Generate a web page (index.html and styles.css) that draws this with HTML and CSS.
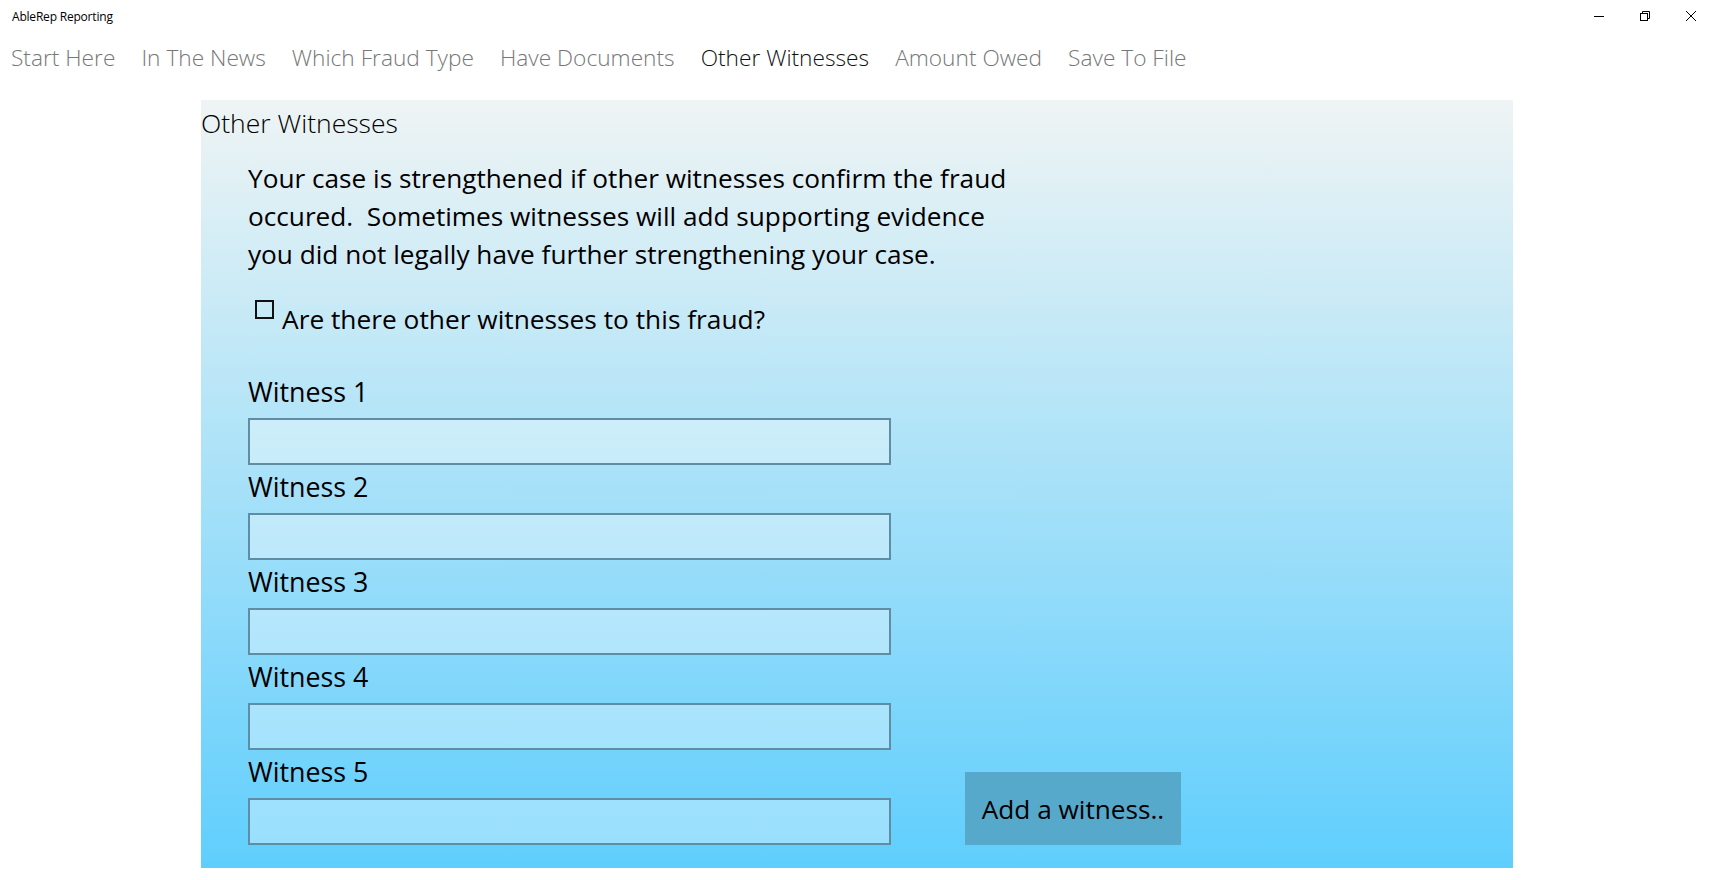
FILE: index.html
```html
<!DOCTYPE html>
<html lang="en">
<head>
  <meta charset="UTF-8" />
  <meta name="viewport" content="width=device-width, initial-scale=1.0" />
  <title>AbleRep Reporting</title>
  <link rel="stylesheet" href="styles.css">
</head>
<body>
  <header class="titlebar">
    <span class="app-name">AbleRep Reporting</span>
    <div class="win-controls">
      <svg class="win-btn" width="46" height="32" viewBox="0 0 46 32">
        <line x1="18" y1="16.5" x2="28" y2="16.5" stroke="#000" stroke-width="1" />
      </svg>
      <svg class="win-btn" width="46" height="32" viewBox="0 0 46 32">
        <rect x="18.5" y="13.5" width="7" height="7" fill="none" stroke="#000" stroke-width="1" />
        <path d="M20.5 13.5 V11.5 H27.5 V18.5 H25.5" fill="none" stroke="#000" stroke-width="1" />
      </svg>
      <svg class="win-btn" width="46" height="32" viewBox="0 0 46 32">
        <path d="M18 11 L28 21 M28 11 L18 21" stroke="#000" stroke-width="1" />
      </svg>
    </div>
  </header>

  <nav class="tabs">
    <a href="#">Start Here</a>
    <a href="#">In The News</a>
    <a href="#">Which Fraud Type</a>
    <a href="#">Have Documents</a>
    <a href="#" class="active">Other Witnesses</a>
    <a href="#">Amount Owed</a>
    <a href="#">Save To File</a>
  </nav>

  <main>
    <section class="panel">
      <h1 class="panel-title">Other Witnesses</h1>
      <p class="intro">
        Your case is strengthened if other witnesses confirm the fraud<br>
        occured.&nbsp; Sometimes witnesses will add supporting evidence<br>
        you did not legally have further strengthening your case.
      </p>

      <label class="check-row">
        <input type="checkbox" id="has-witnesses" />
        <span class="box"></span>
        <span>Are there other witnesses to this fraud?</span>
      </label>

      <div class="witness-area">
        <div class="witness-list">
          <label class="witness">
            <span>Witness 1</span>
            <input type="text" name="witness1" />
          </label>
          <label class="witness">
            <span>Witness 2</span>
            <input type="text" name="witness2" />
          </label>
          <label class="witness">
            <span>Witness 3</span>
            <input type="text" name="witness3" />
          </label>
          <label class="witness">
            <span>Witness 4</span>
            <input type="text" name="witness4" />
          </label>
          <label class="witness">
            <span>Witness 5</span>
            <input type="text" name="witness5" />
          </label>
        </div>
        <button class="add-btn">Add a witness..</button>
      </div>
    </section>
  </main>
</body>
</html>
```

FILE: styles.css
```css
body {
  margin: 0;
  font-family: "Open Sans", "Noto Sans", sans-serif;
  background-color: #ffffff;
  color: #000;
}
.titlebar {
  height: 32px;
  display: flex;
  align-items: center;
  justify-content: space-between;
}
.app-name {
  padding-left: 12px;
  font-size: 12px;
  letter-spacing: -0.2px;
}
.win-controls {
  display: flex;
  align-self: flex-start;
}
.win-btn {
  display: block;
}
.tabs {
  display: flex;
  gap: 26px;
  padding: 10px 0 0 11px;
  line-height: 32px;
}
.tabs a {
  font-size: 22.7px;
  font-weight: 300;
  color: #777;
  text-decoration: none;
}
.tabs a.active {
  color: #111;
}
.panel {
  margin: 26px 0 0 201px;
  width: 1312px;
  height: 768px;
  background: linear-gradient(#eff4f4, #5fcefd);
}
.panel-title {
  margin: 0;
  font-size: 26.5px;
  font-weight: 300;
  line-height: 46px;
}
.intro {
  margin: 13px 0 0 47px;
  font-size: 26.2px;
  line-height: 38px;
}
.check-row {
  display: flex;
  align-items: flex-start;
  margin: 27px 0 0 54px;
  font-size: 26.3px;
  line-height: 38px;
}
.check-row input {
  display: none;
}
.check-row .box {
  width: 15px;
  height: 15px;
  border: 2px solid #111;
  margin-right: 8px;
}
.witness-area {
  display: flex;
  align-items: flex-end;
  gap: 74px;
  margin: 32px 0 0 47px;
}
.witness {
  display: block;
  font-size: 26.8px;
}
.witness span {
  display: block;
  line-height: 44px;
  margin-bottom: 4px;
}
.witness input {
  display: block;
  box-sizing: border-box;
  width: 643px;
  height: 47px;
  margin: 0;
  border: 2px solid #5f8da4;
  background: rgba(255, 255, 255, 0.35);
  font: inherit;
  padding: 0 8px;
}
.add-btn {
  width: 216px;
  height: 73px;
  border: none;
  background-color: #56a9cb;
  font-family: inherit;
  font-size: 26.2px;
  color: #000;
  padding: 0;
}
```
